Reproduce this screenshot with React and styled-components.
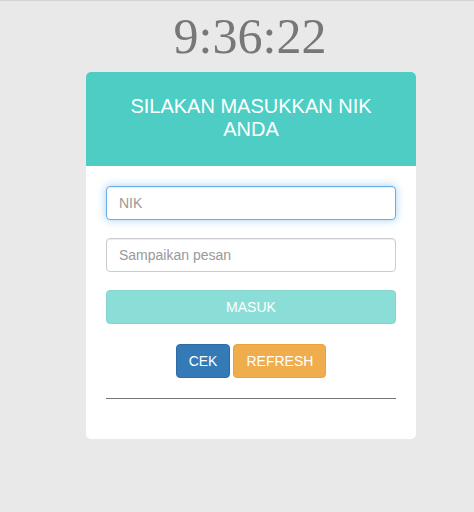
import styled, { createGlobalStyle } from "styled-components";

const GlobalStyle = createGlobalStyle`
    html, body {
        margin: 0;
        padding: 0;
    }
    body {
        background: #e9e9e9;
        border-top: 1px solid #d3d3d3;
        font-family: "Liberation Sans", Arial, sans-serif;
        font-size: 14px;
        min-height: 511px;
    }
`

const Page = styled.main`
    display: flex;
    flex-direction: column;
    align-items: center;
    padding-left: 28px;
`

const Clock = styled.div`
    margin-top: 7px;
    margin-right: 2px;
    height: 56px;
    line-height: 56px;
    font-family: "Liberation Serif", "Times New Roman", serif;
    font-size: 50px;
    color: #777;
    text-align: center;
`

const Card = styled.section`
    margin-top: 8px;
    width: 330px;
    background: #fff;
    border-radius: 5px;
    overflow: hidden;
`

const CardHeader = styled.header`
    background: #4ecdc4;
    height: 94px;
    box-sizing: border-box;
    padding: 23px 20px 0;
`

const Title = styled.h3`
    margin: 0;
    font-size: 20px;
    font-weight: normal;
    line-height: 23px;
    color: #fff;
    text-align: center;
`

const CardBody = styled.div`
    padding: 20px 20px 40px;
    display: flex;
    flex-direction: column;
`

const Input = styled.input`
    box-sizing: border-box;
    width: 100%;
    height: 34px;
    padding: 6px 12px;
    margin-bottom: 18px;
    font-family: inherit;
    font-size: 14px;
    color: #555;
    background: #fff;
    border: 1px solid ${p => (p.$focused ? "#66afe9" : "#ccc")};
    border-radius: 4px;
    outline: none;
    box-shadow: ${p => p.$focused
        ? "inset 0 1px 1px rgba(0,0,0,.075), 0 0 8px rgba(102,175,233,.6)"
        : "inset 0 1px 1px rgba(0,0,0,.075)"};

    &::placeholder {
        color: #999;
    }
`

const Button = styled.button`
    box-sizing: border-box;
    height: 34px;
    padding: 6px 12px;
    font-family: inherit;
    font-size: 14px;
    line-height: 20px;
    color: #fff;
    background: ${p => p.$bg};
    border: 1px solid ${p => p.$border};
    border-radius: 4px;
    cursor: pointer;
    opacity: ${p => (p.disabled ? 0.65 : 1)};
`

const WideButton = styled(Button)`
    width: 100%;
`

const ButtonRow = styled.div`
    display: flex;
    justify-content: center;
    gap: 3px;
    margin-top: 20px;
`

const Divider = styled.hr`
    margin: 20px 0 0;
    border: 0;
    border-top: 1px solid #777;
`

export default function App() {
    return (
        <>
            <GlobalStyle />
            <Page>
                <Clock>9:36:22</Clock>
                <Card>
                    <CardHeader>
                        <Title>SILAKAN MASUKKAN NIK ANDA</Title>
                    </CardHeader>
                    <CardBody>
                        <Input $focused autoFocus placeholder="NIK" />
                        <Input placeholder="Sampaikan pesan" />
                        <WideButton $bg="#4ecdc4" $border="#46bdb5" disabled>MASUK</WideButton>
                        <ButtonRow>
                            <Button $bg="#337ab7" $border="#2e6da4">CEK</Button>
                            <Button $bg="#f0ad4e" $border="#eea236">REFRESH</Button>
                        </ButtonRow>
                        <Divider />
                    </CardBody>
                </Card>
            </Page>
        </>
    )
}
